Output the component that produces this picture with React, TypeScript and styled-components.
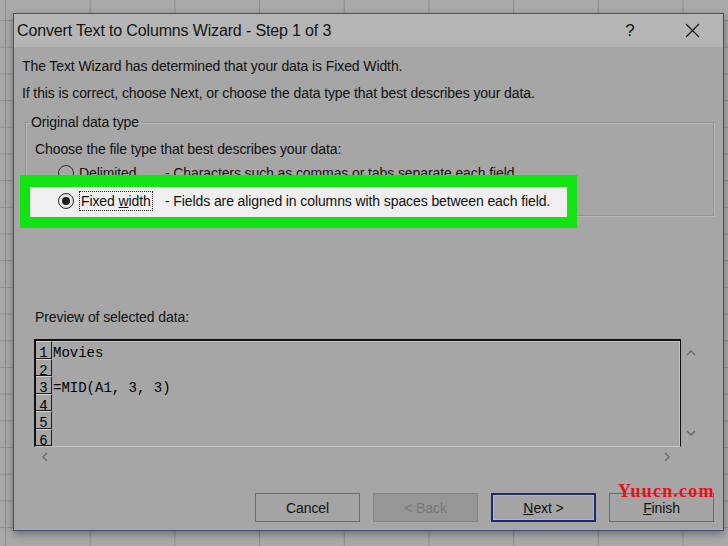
import React from 'react';
import styled, { createGlobalStyle } from 'styled-components';

const GlobalStyle = createGlobalStyle`
  html, body {
    margin: 0;
    padding: 0;
  }
  body {
    width: 728px;
    height: 546px;
    overflow: hidden;
    background-color: #a9a9a9;
    background-image:
      linear-gradient(90deg, #8c8c8c 1px, transparent 1px),
      linear-gradient(#8f8f8f 1px, transparent 1px);
    background-size: 84.7px 100%, 100% 26.7px;
    background-position: 5px 0, 0 20px;
  }
`;

const Page = styled.div`
  position: relative;
  width: 728px;
  height: 546px;
  box-sizing: border-box;
  padding: 13px 0 0 13px;
`;

const Dialog = styled.div`
  width: 711px;
  height: 518px;
  box-sizing: border-box;
  display: flex;
  flex-direction: column;
  border: 1px solid #40507a;
  background: #a6a6a6;
  box-shadow: 0 3px 8px rgba(0, 0, 0, 0.35);
  font-family: 'Liberation Sans', Arial, sans-serif;
  color: #111;
`;

const TitleBar = styled.div`
  flex: none;
  height: 33px;
  display: flex;
  align-items: center;
  padding-left: 3px;
  background: #b5b5b5;
`;

const Title = styled.div`
  flex: 1;
  font-size: 16px;
  letter-spacing: -0.15px;
  color: #141414;
`;

const TitleButton = styled.div`
  width: 62px;
  height: 33px;
  display: flex;
  align-items: center;
  justify-content: center;
  font-size: 17px;
  color: #141414;
`;

const Body = styled.div`
  flex: 1;
  display: flex;
  flex-direction: column;
  padding: 6px 9px 8px 8px;
  font-size: 14px;
  letter-spacing: -0.1px;
`;

const Intro = styled.p`
  margin: 0;
  line-height: 27px;
`;

const GroupBox = styled.fieldset`
  margin: 5px 0 0 3px;
  padding: 0 0 3px 3px;
  min-width: 0;
  border: 1px solid #929292;
  box-shadow: inset 1px 1px 0 #b6b6b6, 1px 1px 0 #b6b6b6;
`;

const Legend = styled.legend`
  padding: 0 2px;
  line-height: 20px;
`;

const Prompt = styled.div`
  margin: 7px 0 0 6px;
  line-height: 20px;
`;

const RadioRow = styled.div<{ $highlight?: boolean; $gap: number }>`
  position: relative;
  z-index: ${(p) => (p.$highlight ? 1 : 'auto')};
  display: flex;
  align-items: center;
  height: 22px;
  margin-top: ${(p) => p.$gap}px;
  padding-left: 29px;

  ${(p) =>
    p.$highlight &&
    `
    &::before {
      content: '';
      position: absolute;
      left: -9px;
      top: -15px;
      width: 557px;
      height: 53px;
      box-sizing: border-box;
      border-style: solid;
      border-color: #12e312;
      border-width: 12px 10px 11px 10px;
      background: #efefef;
      z-index: -1;
    }
  `}
`;

const Radio = styled.span<{ $checked?: boolean }>`
  width: 16px;
  height: 16px;
  flex: none;
  box-sizing: border-box;
  border-radius: 50%;
  border: 1px solid #2a2a2a;
  display: flex;
  align-items: center;
  justify-content: center;
  background: ${(p) => (p.$checked ? '#e6e6e6' : 'transparent')};

  &::after {
    content: '';
    width: 8px;
    height: 8px;
    border-radius: 50%;
    background: ${(p) => (p.$checked ? '#1e1e1e' : 'transparent')};
  }
`;

const OptionLabel = styled.span`
  width: 86px;
  margin-left: 5px;
  flex: none;
`;

const FocusBox = styled.span`
  padding: 1px 1px;
  border: 1px dotted #222;
`;

const OptionHint = styled.span`
  white-space: nowrap;
`;

const SectionLabel = styled.div`
  margin: 91px 0 0 13px;
  line-height: 20px;
`;

const Preview = styled.div`
  margin: 12px 0 0 12px;
  display: grid;
  grid-template-columns: 647px 20px;
  grid-template-rows: 108px 20px;
`;

const PreviewBox = styled.div`
  box-sizing: border-box;
  overflow: hidden;
  border-top: 2px solid #111;
  border-left: 2px solid #111;
  border-right: 1px solid #111;
  border-bottom: 1px solid #c4c4c4;
  box-shadow: inset 0 1px 0 #c8c8c8, inset -1px 0 0 #c0c0c0;
  font-family: 'Liberation Mono', 'Courier New', monospace;
  font-size: 14px;
  letter-spacing: 0;
  color: #000;
`;

const DataRow = styled.div`
  display: flex;
  height: 17.5px;
`;

const RowNumber = styled.div`
  width: 16px;
  height: 17.5px;
  flex: none;
  box-sizing: border-box;
  border-top: 1px solid #d6d6d6;
  border-bottom: 1px solid #1e1e1e;
  border-right: 1px solid #1e1e1e;
  padding-top: 6px;
  text-align: center;
  line-height: 11px;
`;

const DataCell = styled.div`
  padding: 7px 0 0 1px;
  line-height: 11px;
  white-space: pre;
`;

const VScroll = styled.div`
  display: flex;
  flex-direction: column;
  align-items: center;
  justify-content: space-between;
  padding: 10px 0;
`;

const HScroll = styled.div`
  display: flex;
  align-items: center;
  justify-content: space-between;
  padding: 0 10px 0 7px;
`;

const ButtonRow = styled.div`
  margin-top: 26px;
  display: flex;
  justify-content: flex-end;
  gap: 13px;
`;

const Button = styled.div<{ $variant?: 'default' | 'disabled' | 'primary' }>`
  width: 105px;
  height: 29px;
  box-sizing: border-box;
  display: flex;
  align-items: center;
  justify-content: center;
  font-size: 14px;
  border: ${(p) =>
    p.$variant === 'primary'
      ? '2px solid #1b2a72'
      : p.$variant === 'disabled'
      ? '1px solid #858585'
      : '1px solid #6c6c6c'};
  box-shadow: ${(p) => (p.$variant === 'primary' ? 'inset 0 0 0 1px #b7b7b7' : 'none')};
  background: ${(p) => (p.$variant === 'disabled' ? '#969696' : '#a4a4a4')};
  color: ${(p) => (p.$variant === 'disabled' ? '#777' : '#111')};
`;

const Watermark = styled.div`
  position: absolute;
  left: 618px;
  top: 481px;
  font-family: 'Liberation Serif', 'Times New Roman', serif;
  font-weight: bold;
  font-size: 18px;
  letter-spacing: 1.2px;
  line-height: 20px;
  color: #e4121b;
`;

const Chevron = ({ dir }: { dir: 'up' | 'down' | 'left' | 'right' }) => {
  const paths = {
    up: 'M1 6 L5 2 L9 6',
    down: 'M1 2 L5 6 L9 2',
    left: 'M6 1 L2 5 L6 9',
    right: 'M2 1 L6 5 L2 9',
  };
  const vertical = dir === 'up' || dir === 'down';
  return (
    <svg
      width={vertical ? 10 : 8}
      height={vertical ? 8 : 10}
      viewBox={vertical ? '0 0 10 8' : '0 0 8 10'}
      fill="none"
      stroke="#6a6a6a"
      strokeWidth="1.4"
    >
      <path d={paths[dir]} />
    </svg>
  );
};

const rows = ['Movies', '', '=MID(A1, 3, 3)', '', '', ''];

const App = () => {
  return (
    <Page>
      <GlobalStyle />
      <Dialog>
        <TitleBar>
          <Title>Convert Text to Columns Wizard - Step 1 of 3</Title>
          <TitleButton>?</TitleButton>
          <TitleButton>
            <svg width="15" height="15" viewBox="0 0 15 15" stroke="#151515" strokeWidth="1.2">
              <path d="M1 1 L14 14 M14 1 L1 14" />
            </svg>
          </TitleButton>
        </TitleBar>
        <Body>
          <Intro>The Text Wizard has determined that your data is Fixed Width.</Intro>
          <Intro>If this is correct, choose Next, or choose the data type that best describes your data.</Intro>

          <GroupBox>
            <Legend>Original data type</Legend>
            <Prompt>Choose the file type that best describes your data:</Prompt>
            <RadioRow $gap={3}>
              <Radio />
              <OptionLabel>Delimited</OptionLabel>
              <OptionHint>- Characters such as commas or tabs separate each field.</OptionHint>
            </RadioRow>
            <RadioRow $gap={6} $highlight>
              <Radio $checked />
              <OptionLabel>
                <FocusBox>
                  Fixed <u>w</u>idth
                </FocusBox>
              </OptionLabel>
              <OptionHint>- Fields are aligned in columns with spaces between each field.</OptionHint>
            </RadioRow>
          </GroupBox>

          <SectionLabel>Preview of selected data:</SectionLabel>
          <Preview>
            <PreviewBox>
              {rows.map((text, i) => (
                <DataRow key={i}>
                  <RowNumber>{i + 1}</RowNumber>
                  <DataCell>{text}</DataCell>
                </DataRow>
              ))}
            </PreviewBox>
            <VScroll>
              <Chevron dir="up" />
              <Chevron dir="down" />
            </VScroll>
            <HScroll>
              <Chevron dir="left" />
              <Chevron dir="right" />
            </HScroll>
          </Preview>

          <ButtonRow>
            <Button>Cancel</Button>
            <Button $variant="disabled">&lt; Back</Button>
            <Button $variant="primary">
              <u>N</u>ext &gt;
            </Button>
            <Button>
              <u>F</u>inish
            </Button>
          </ButtonRow>
        </Body>
      </Dialog>
      <Watermark>Yuucn.com</Watermark>
    </Page>
  );
};

export default App;
